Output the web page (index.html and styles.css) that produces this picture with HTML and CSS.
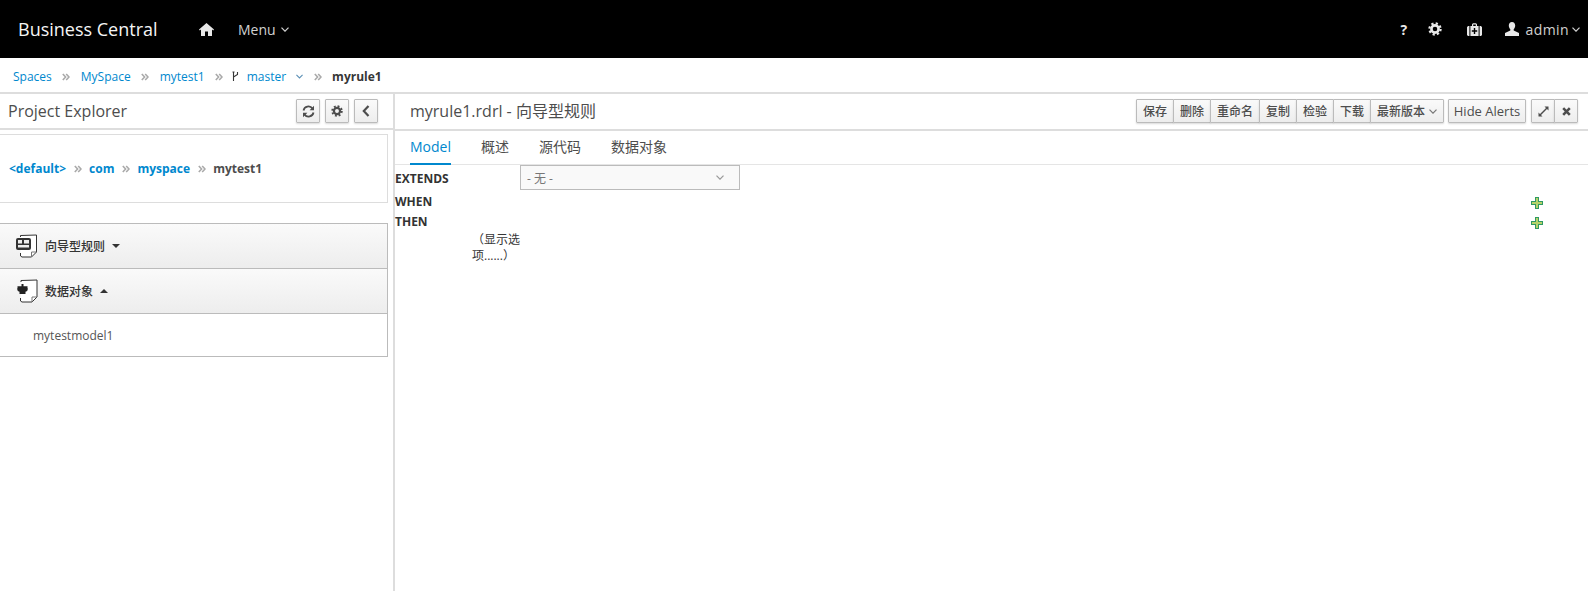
FILE: index.html
```html
<!DOCTYPE html>
<html lang="zh">
<head>
  <meta charset="UTF-8">
  <title>Business Central</title>
  <link rel="stylesheet" href="styles.css">
</head>
<body>
  <svg class="sprites" width="0" height="0">
    <symbol id="i-chevron" viewBox="0 0 8 5"><path d="M.5.7 4 4.200 7.500.7" fill="none" stroke="currentColor" stroke-width="1.200"/></symbol>
    <symbol id="i-gear" viewBox="0 0 14 14">
      <circle cx="7" cy="7" r="3.600" fill="none" stroke="currentColor" stroke-width="2.600"/>
      <circle cx="7" cy="7" r="5.600" fill="none" stroke="currentColor" stroke-width="2.200" stroke-dasharray="2.200 2.200"/>
    </symbol>
    <symbol id="i-crumb" viewBox="0 0 8 8"><path d="M.8 1 3.600 4 .8 7M4.200 1 7 4 4.200 7" fill="none" stroke="currentColor" stroke-width="1.600"/></symbol>
    <symbol id="i-plus" viewBox="0 0 12 12">
      <path d="M4 0h4v4h4v4H8v4H4V8H0V4h4z" fill="#2f9a63"/>
      <path d="M5 1h2v4h4v2H7v4H5V7H1V5h4z" fill="#b5d26a"/>
    </symbol>
  </svg>

  <header class="navbar">
    <a class="brand">Business Central</a>
    <svg class="nav-home" width="15" height="13" viewBox="0 0 15 13"><path d="M7.500 0 15 6.600l-.8.9-1.200-1V13H9V8.600H6V13H2V6.500L.8 7.500 0 6.600z" fill="currentColor"/></svg>
    <span class="nav-item">Menu <svg class="chev" width="8" height="5"><use href="#i-chevron"/></svg></span>
    <div class="nav-right">
      <span class="nav-help">?</span>
      <svg class="nav-gear" width="14" height="14"><use href="#i-gear"/></svg>
      <svg class="nav-case" width="15" height="13" viewBox="0 0 15 13"><path d="M5 3V1.200L6 .3h3l1 .9V3h1.600v10H3.400V3zm1.200 0h2.600V1.500H6.200zM6.800 5v2.200H4.800v1.600h2V11h1.400V8.800h2V7.200h-2V5zM0 4.200 1 3h1.400v10H1l-1-1zm15 0L14 3h-1.400v10H14l1-1z" fill="currentColor" fill-rule="evenodd"/></svg>
      <svg class="nav-user" width="14" height="14" viewBox="0 0 14 14"><path d="M7 0c2 0 3.200 1.500 3.200 3.600 0 1.500-.6 2.900-1.500 3.600v1.300L14 11v3H0v-3l5.300-2.500V7.200C4.400 6.500 3.800 5.100 3.800 3.600 3.800 1.500 5 0 7 0z" fill="currentColor"/></svg>
      <span class="nav-item nav-admin">admin <svg class="chev" width="8" height="5"><use href="#i-chevron"/></svg></span>
    </div>
  </header>

  <nav class="crumbs">
    <a>Spaces</a>
    <svg class="crumb-sep" width="8" height="8"><use href="#i-crumb"/></svg>
    <a>MySpace</a>
    <svg class="crumb-sep" width="8" height="8"><use href="#i-crumb"/></svg>
    <a>mytest1</a>
    <svg class="crumb-sep" width="8" height="8"><use href="#i-crumb"/></svg>
    <svg class="branch" width="7" height="11" viewBox="0 0 7 11"><path d="M1.500 1v9M5.500 1v2.500L1.500 6" fill="none" stroke="#363636" stroke-width="1.100"/><path d="M.5 1h2" stroke="#363636"/></svg>
    <a class="branch-name">master <svg class="chev-small" width="7" height="5"><use href="#i-chevron"/></svg></a>
    <svg class="crumb-sep" width="8" height="8"><use href="#i-crumb"/></svg>
    <strong>myrule1</strong>
  </nav>

  <main class="workbench">
    <aside class="explorer">
      <div class="explorer-head">
        <span class="panel-title">Project Explorer</span>
        <div class="head-btns">
          <button class="btn btn-icon">
            <svg width="13" height="13" viewBox="0 0 13 13"><path d="M1.500 5.500A5 5 0 0 1 10.500 3.500M11.500 7.500A5 5 0 0 1 2.500 9.500" fill="none" stroke="currentColor" stroke-width="1.800"/><path d="M12 .8v4.400H7.600zM1 12.200V7.800h4.400z" fill="currentColor"/></svg>
          </button>
          <button class="btn btn-icon"><svg width="12" height="12"><use href="#i-gear"/></svg></button>
          <button class="btn btn-icon"><svg width="8" height="12" viewBox="0 0 8 12"><path d="M6.500 1 1.800 6l4.700 5" fill="none" stroke="currentColor" stroke-width="2.200"/></svg></button>
        </div>
      </div>

      <div class="package-box">
        <a>&lt;default&gt;</a>
        <svg class="crumb-sep" width="8" height="8"><use href="#i-crumb"/></svg>
        <a>com</a>
        <svg class="crumb-sep" width="8" height="8"><use href="#i-crumb"/></svg>
        <a>myspace</a>
        <svg class="crumb-sep" width="8" height="8"><use href="#i-crumb"/></svg>
        <span>mytest1</span>
      </div>

      <div class="accordion">
        <div class="acc-head">
          <svg class="acc-icon" width="23" height="24" viewBox="0 0 23 24">
            <path d="M5.500 3V1.500L21.500 1v17l-5 5H7l-1.500-1v-3" fill="#fff" stroke="#333"/>
            <path d="M16.500 23v-5h5" fill="none" stroke="#777"/>
            <rect x="1" y="4" width="15" height="12" rx="2" fill="#333"/>
            <path d="M3 6h4v3.500H3zM9 6h5v3.500H9zM3 11h11v2.500H3z" fill="#eee"/>
          </svg>
          <span>向导型规则</span>
          <i class="caret"></i>
        </div>
        <div class="acc-head acc-open">
          <svg class="acc-icon" width="23" height="24" viewBox="0 0 23 24">
            <path d="M6 3V1.500L22 1v17l-5 5H7l-1.500-1v-3" fill="#fff" stroke="#333"/>
            <path d="M17 23v-5h5" fill="none" stroke="#777"/>
            <path d="M6.500 5h2v2.200H12.500v2.300H13l-.8 2.500-1.700.8v2.200H4.500v-2.200L2.800 12 2 9.500h.5V7.200h4z" fill="#222"/>
          </svg>
          <span>数据对象</span>
          <i class="caret caret-up"></i>
        </div>
        <div class="acc-body">mytestmodel1</div>
      </div>
    </aside>

    <section class="editor">
      <div class="editor-head">
        <span class="panel-title">myrule1.rdrl - 向导型规则</span>
        <div class="toolbar">
          <div class="btn-group">
            <button class="btn">保存</button>
            <button class="btn">删除</button>
            <button class="btn">重命名</button>
            <button class="btn">复制</button>
            <button class="btn">检验</button>
            <button class="btn">下载</button>
            <button class="btn btn-version">最新版本 <svg class="chev-small" width="8" height="5"><use href="#i-chevron"/></svg></button>
          </div>
          <button class="btn btn-alerts">Hide Alerts</button>
          <div class="btn-group group-win">
            <button class="btn btn-win"><svg width="11" height="11" viewBox="0 0 11 11"><path d="M6.500.5h4v4L9 3 3 9l1.500 1.500h-4v-4L2 8l6-6z" fill="currentColor"/></svg></button>
            <button class="btn btn-win"><svg width="9" height="9" viewBox="0 0 9 9"><path d="M1.200 1.200l6.600 6.600M7.800 1.200 1.200 7.800" stroke="currentColor" stroke-width="2.600"/></svg></button>
          </div>
        </div>
      </div>

      <ul class="tabs">
        <li class="active">Model</li>
        <li>概述</li>
        <li>源代码</li>
        <li>数据对象</li>
      </ul>

      <div class="rule-form">
        <div class="rule-row row-extends">
          <b>EXTENDS</b>
          <div class="fake-select">- 无 - <svg class="chev-small" width="8" height="5"><use href="#i-chevron"/></svg></div>
        </div>
        <div class="rule-row row-when">
          <b>WHEN</b>
          <svg class="add" width="12" height="12"><use href="#i-plus"/></svg>
        </div>
        <div class="rule-row">
          <b>THEN</b>
          <svg class="add" width="12" height="12"><use href="#i-plus"/></svg>
        </div>
        <div class="show-options">（显示选项......）</div>
      </div>
    </section>
  </main>
</body>
</html>
```
FILE: styles.css
```css
* {
  box-sizing: border-box;
}
html, body {
  height: 100%;
}
body {
  margin: 0;
  height: 591px;
  overflow: hidden;
  display: flex;
  flex-direction: column;
  font-family: "Open Sans", "Noto Sans CJK SC", sans-serif;
  font-size: 12px;
  color: #363636;
  background-color: #fff;
}
.sprites {
  position: absolute;
}
a {
  color: #0088ce;
}

/* top bar */
.navbar {
  height: 58px;
  flex: none;
  display: flex;
  align-items: center;
  padding: 0 8px 0 18px;
  background-color: #000;
  color: #d1d1d1;
}
.brand {
  width: 181px;
  font-size: 18px;
  color: #f5f5f5;
}
.nav-home {
  color: #e8e8e8;
  margin-right: 24px;
}
.nav-item {
  font-size: 14px;
  display: flex;
  align-items: center;
  gap: 5px;
}
.nav-right {
  margin-left: auto;
  display: flex;
  align-items: center;
  color: #e8e8e8;
}
.nav-help {
  font-size: 14px;
  font-weight: 700;
  width: 8px;
  margin-right: 19px;
}
.nav-gear {
  margin-right: 25px;
}
.nav-case {
  margin-right: 23px;
}
.nav-user {
  margin-right: 7px;
}
.nav-admin {
  color: #d1d1d1;
  letter-spacing: .4px;
  gap: 3px;
}

/* breadcrumb row */
.crumbs {
  height: 36px;
  flex: none;
  display: flex;
  align-items: center;
  padding: 3px 0 0 13px;
  border-bottom: 2px solid #ddd;
}
.crumb-sep {
  color: #aaa;
  margin: 0 10.5px;
  flex: none;
}
.branch {
  margin-right: 8px;
  margin-left: -2px;
}
.branch-name {
  display: flex;
  align-items: center;
  gap: 10px;
}
.branch-name .chev-small {
  color: #5a8fb5;
}
.crumbs strong {
  font-weight: 700;
}
.chev-small {
  color: #777;
}

.workbench {
  flex: 1;
  display: flex;
  min-height: 0;
}

/* left panel */
.explorer {
  width: 395px;
  flex: none;
  border-right: 2px solid #ddd;
}
.explorer-head {
  height: 36px;
  display: flex;
  align-items: center;
  justify-content: space-between;
  padding: 0 15px 0 8px;
  border-bottom: 2px solid #ddd;
}
.panel-title {
  font-size: 16px;
  color: #4d4d4d;
}
.head-btns {
  display: flex;
  gap: 5px;
}
.btn {
  height: 24px;
  padding: 0 6px;
  display: inline-flex;
  align-items: center;
  justify-content: center;
  gap: 4px;
  font: inherit;
  color: #4d4d4d;
  background: linear-gradient(#fafafa, #ededed);
  border: 1px solid #bbb;
  border-radius: 1px;
  box-shadow: 0 1px 2px rgba(0, 0, 0, .15);
}
.btn-icon {
  width: 24px;
  padding: 0;
}
.package-box {
  height: 69px;
  margin: 4px 5px 20px 0;
  padding-left: 9px;
  display: flex;
  align-items: center;
  font-weight: 700;
  border: 1px solid #ddd;
  border-left: none;
}
.package-box .crumb-sep {
  margin: 0 7.5px;
}
.package-box span {
  color: #4d4d4d;
}
.accordion {
  margin-right: 5px;
  border: 1px solid #bbb;
  border-left: none;
}
.acc-head {
  height: 45px;
  display: flex;
  align-items: center;
  padding-left: 15px;
  font-weight: 500;
  color: #333;
  background: linear-gradient(#fafafa, #ededed);
  border-bottom: 1px solid #bbb;
}
.acc-icon {
  margin-right: 7px;
}
.caret {
  margin-left: 7px;
  border-left: 4px solid transparent;
  border-right: 4px solid transparent;
  border-top: 4px solid #333;
}
.caret-up {
  border-top: none;
  border-bottom: 4px solid #333;
}
.acc-body {
  height: 42px;
  padding-left: 33px;
  line-height: 44px;
  color: #555;
}

/* editor */
.editor {
  flex: 1;
  min-width: 0;
  display: flex;
  flex-direction: column;
}
.editor-head {
  height: 37px;
  flex: none;
  display: flex;
  align-items: center;
  justify-content: space-between;
  padding: 0 10px 1px 15px;
  border-bottom: 2px solid #ddd;
}
.editor-head .panel-title {
  margin-bottom: 2px;
}
.toolbar {
  display: flex;
  gap: 4px;
}
.btn-group {
  display: flex;
}
.btn-group .btn + .btn {
  margin-left: -1px;
}
.btn-group .btn {
  font-weight: 500;
}
.btn-alerts {
  width: 78px;
  padding: 0;
  font-size: 13px;
}
.group-win {
  margin-left: 1px;
}
.btn-win {
  width: 24px;
  padding: 0;
}
.tabs {
  height: 34px;
  flex: none;
  display: flex;
  gap: 30px;
  margin: 0;
  padding: 0 0 0 15px;
  list-style: none;
  font-size: 14px;
  color: #4d4d4d;
  border-bottom: 1px solid #e5e5e5;
}
.tabs li {
  line-height: 31px;
  height: 34px;
}
.tabs .active {
  color: #0088ce;
  border-bottom: 2px solid #0088ce;
}

/* rule form */
.rule-form {
  flex: 1;
}
.rule-row {
  height: 20px;
  display: flex;
  align-items: center;
  justify-content: space-between;
  padding-right: 45px;
}
.rule-row b {
  font-weight: 700;
  color: #333;
}
.row-extends {
  height: 25px;
  justify-content: flex-start;
}
.row-extends b {
  width: 125px;
  padding-top: 2px;
}
.row-when {
  margin-top: 1px;
}
.add {
  margin-top: 3px;
}
.fake-select {
  width: 220px;
  height: 25px;
  padding: 0 15px 0 6px;
  display: flex;
  align-items: center;
  justify-content: space-between;
  color: #777;
  background-color: #f9f9f9;
  border: 1px solid #bbb;
}
.fake-select .chev-small {
  color: #999;
}
.show-options {
  width: 50px;
  margin: 1px 0 0 77px;
  line-height: 16px;
  color: #363636;
}
```
